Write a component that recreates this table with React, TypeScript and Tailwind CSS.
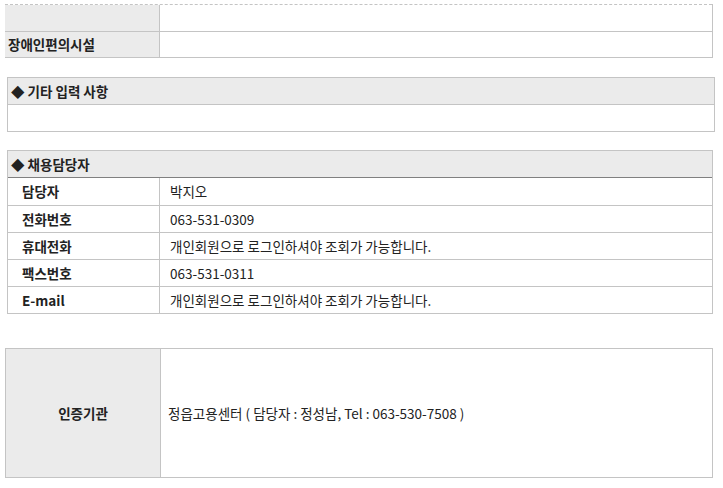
const font = { fontFamily: '"Noto Sans CJK KR", "Noto Sans", sans-serif' };

const contacts = [
  { label: "담당자", value: "박지오" },
  { label: "전화번호", value: "063-531-0309" },
  { label: "휴대전화", value: "개인회원으로 로그인하셔야 조회가 가능합니다." },
  { label: "팩스번호", value: "063-531-0311" },
  { label: "E-mail", value: "개인회원으로 로그인하셔야 조회가 가능합니다." },
];

export default function App() {
  return (
    <div
      className="w-[723px] h-[488px] bg-white text-[13.5px] text-[#222] overflow-hidden"
      style={font}
    >
      {/* 편의시설 */}
      <div className="ml-[5px] mt-[4px] w-[708px] border-r border-[#c4c4c4]">
        <div className="flex h-[27px] border-t border-dashed border-[#c4c4c4]">
          <div className="w-[155px] bg-[#ebebeb] border-r border-[#c4c4c4]" />
          <div className="flex-1" />
        </div>
        <div className="flex h-[27px] border-t border-b border-[#c4c4c4]">
          <div className="w-[155px] bg-[#ebebeb] border-r border-[#c4c4c4] flex items-center pl-[3px] font-bold">
            장애인편의시설
          </div>
          <div className="flex-1" />
        </div>
      </div>

      {/* 기타 입력 사항 */}
      <div className="ml-[7px] mt-[19px] w-[708px] border border-[#c4c4c4]">
        <div className="h-[27px] bg-[#ebebeb] border-b border-[#c4c4c4] flex items-center pl-[3px] font-bold">
          ◆ 기타 입력 사항
        </div>
        <div className="h-[26px]" />
      </div>

      {/* 채용담당자 */}
      <div className="ml-[7px] mt-[18px] w-[706px] border border-[#c4c4c4]">
        <div className="h-[27px] bg-[#ebebeb] border-b border-[#808080] flex items-center pl-[3px] font-bold">
          ◆ 채용담당자
        </div>
        {contacts.map((c, i) => (
          <div
            key={c.label}
            className={
              i === 0
                ? "flex h-[27px]"
                : "flex h-[27px] border-t border-[#c4c4c4]"
            }
          >
            <div className="w-[152px] border-r border-[#c4c4c4] flex items-center pl-[14px] font-bold">
              {c.label}
            </div>
            <div className="flex-1 flex items-center pl-[10px]">{c.value}</div>
          </div>
        ))}
      </div>

      {/* 인증기관 */}
      <div className="ml-[5px] mt-[34px] w-[708px] h-[130px] flex border border-[#c4c4c4]">
        <div className="w-[155px] bg-[#ebebeb] border-r border-[#c4c4c4] flex items-center justify-center font-bold">
          인증기관
        </div>
        <div className="flex-1 flex items-center pl-[7px]">
          정읍고용센터 ( 담당자 : 정성남, Tel : 063-530-7508 )
        </div>
      </div>
    </div>
  );
}
